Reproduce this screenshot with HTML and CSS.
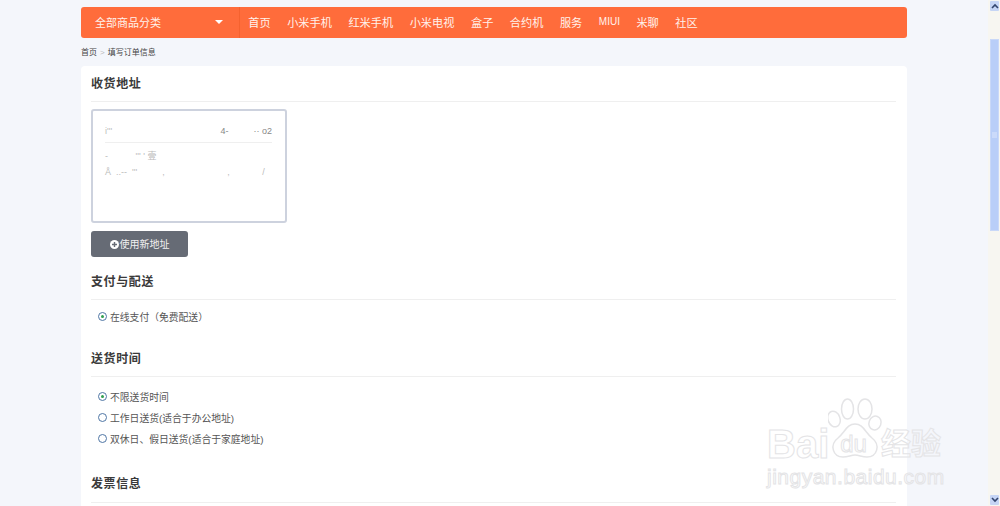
FILE: index.html
```html
<!DOCTYPE html>
<html lang="zh-CN">
<head>
    <meta charset="UTF-8">
    <title>填写订单信息</title>
    <link rel="stylesheet" href="styles.css">
</head>
<body>
    <div class="page">
        <div class="nav">
            <div class="nav-category">全部商品分类<span class="caret"></span></div>
            <a>首页</a>
            <a>小米手机</a>
            <a>红米手机</a>
            <a>小米电视</a>
            <a>盒子</a>
            <a>合约机</a>
            <a>服务</a>
            <a class="nav-latin">MIUI</a>
            <a>米聊</a>
            <a>社区</a>
        </div>

        <div class="crumbs">首页<span class="crumb-sep">&gt;</span>填写订单信息</div>

        <div class="panel">
            <h3 class="first">收货地址</h3>
            <div class="address-card">
                <div class="address-top">
                    <span>i'''</span>
                    <span>4-&nbsp;&nbsp;&nbsp;&nbsp;&nbsp;&nbsp;&nbsp;&nbsp;&nbsp;&nbsp;·· o2</span>
                </div>
                <p class="smudge">-&nbsp;&nbsp;&nbsp;&nbsp;&nbsp;&nbsp;&nbsp;&nbsp;&nbsp;&nbsp;&nbsp;'''&nbsp;'&nbsp;壹</p>
                <p class="smudge">Å&nbsp;&nbsp;..--&nbsp;&nbsp;'''&nbsp;&nbsp;&nbsp;&nbsp;&nbsp;&nbsp;&nbsp;&nbsp;&nbsp;&nbsp;,&nbsp;&nbsp;&nbsp;&nbsp;&nbsp;&nbsp;&nbsp;&nbsp;&nbsp;&nbsp;&nbsp;&nbsp;&nbsp;&nbsp;&nbsp;&nbsp;&nbsp;&nbsp;&nbsp;&nbsp;&nbsp;&nbsp;&nbsp;&nbsp;&nbsp;,&nbsp;&nbsp;&nbsp;&nbsp;&nbsp;&nbsp;&nbsp;&nbsp;&nbsp;&nbsp;&nbsp;&nbsp;&nbsp;/</p>
            </div>
            <button class="new-address">
                <svg width="9" height="9" viewBox="0 0 10 10"><circle cx="5" cy="5" r="5" fill="#fff"/><path d="M5 2.2v5.6M2.2 5h5.6" stroke="#666b75" stroke-width="1.6"/></svg>
                <span>使用新地址</span>
            </button>

            <h3 class="pay">支付与配送</h3>
            <div class="options pay-options">
                <div class="option"><span class="radio checked"></span>在线支付（免费配送）</div>
            </div>

            <h3 class="time">送货时间</h3>
            <div class="options">
                <div class="option"><span class="radio checked"></span>不限送货时间</div>
                <div class="option"><span class="radio"></span>工作日送货(适合于办公地址)</div>
                <div class="option"><span class="radio"></span>双休日、假日送货(适合于家庭地址)</div>
            </div>

            <h3 class="invoice">发票信息</h3>
        </div>

        <!-- watermark -->
        <div class="watermark">
            <svg class="paw" width="58" height="62" viewBox="0 0 58 62">
                <g fill="#fff" stroke="#e4e4e6" stroke-width="1.5">
                    <ellipse cx="6" cy="21" rx="6" ry="8" transform="rotate(-20 6 21)"/>
                    <ellipse cx="19.5" cy="11" rx="6" ry="10"/>
                    <ellipse cx="37" cy="11" rx="7" ry="10"/>
                    <ellipse cx="47" cy="25" rx="6" ry="7" transform="rotate(20 47 25)"/>
                    <path d="M27 26c8 0 10 8 17 14 9 7 5 19-5 19-5 0-8-2-12-2s-7 2-12 2C5 59 1 47 10 40c7-6 9-14 17-14z"/>
                </g>
            </svg>
            <div class="wm-brand"><span>Bai</span><span class="wm-du">du</span><span class="wm-cn">经验</span></div>
            <div class="wm-url">jingyan.baidu.com</div>
        </div>
    </div>

    <div class="scrollbar">
        <div class="scroll-btn">
            <svg width="8" height="6" viewBox="0 0 8 6"><path d="M1 5l3-3 3 3" fill="none" stroke="#33456e" stroke-width="1.6"/></svg>
        </div>
        <div class="scroll-track"><div class="scroll-thumb"><span class="scroll-grip"></span></div></div>
        <div class="scroll-btn">
            <svg width="8" height="6" viewBox="0 0 8 6"><path d="M1 1l3 3 3-3" fill="none" stroke="#33456e" stroke-width="1.6"/></svg>
        </div>
    </div>
</body>
</html>
```

FILE: styles.css
```css
html, body {
    height: 100%;
}

body {
    margin: 0;
    display: flex;
    overflow: hidden;
    background-color: #f4f6fb;
    font-family: "Liberation Sans", "Noto Sans CJK SC", sans-serif;
    color: #555;
}

.page {
    position: relative;
    flex: 1;
    padding: 7px 0 0 81px;
    overflow: hidden;
}

/* nav bar */
.nav {
    width: 826px;
    height: 31px;
    box-sizing: border-box;
    display: flex;
    align-items: center;
    background-color: #ff6c3b;
    border-radius: 3px;
    color: #fff2ec;
    font-size: 11.2px;
}

.nav-category {
    width: 159px;
    height: 100%;
    box-sizing: border-box;
    padding: 0 16px 2px 14px;
    display: flex;
    align-items: center;
    justify-content: space-between;
    border-right: 1px solid #f5622f;
    font-size: 11px;
}

.caret {
    width: 0;
    height: 0;
    border-left: 4px solid transparent;
    border-right: 4px solid transparent;
    border-top: 4px solid #fff;
}

.nav a {
    margin: 0 8.25px;
    padding-bottom: 2px;
}

.nav a.nav-latin {
    font-size: 10px;
}

.crumbs {
    height: 28px;
    line-height: 30px;
    font-size: 8px;
    color: #444;
}

.crumb-sep {
    margin: 0 3px;
    color: #bbb;
}

.panel {
    width: 826px;
    height: 480px;
    box-sizing: border-box;
    padding: 0 11px 0 10px;
    background-color: #fff;
    border-radius: 4px;
}

h3 {
    margin: 0;
    padding-bottom: 8px;
    border-bottom: 1px solid #efefef;
    font-size: 12px;
    line-height: 18px;
    letter-spacing: 0.6px;
    color: #3a3a3a;
}

h3.first {
    padding-top: 9px;
}

h3.pay {
    margin-top: 16px;
}

h3.time {
    margin-top: 23px;
}

h3.invoice {
    margin-top: 26px;
    padding-bottom: 9px;
}

.address-card {
    width: 196px;
    height: 114px;
    box-sizing: border-box;
    margin-top: 7px;
    padding: 14px 13px 0 12px;
    border: 2px solid #cdd2de;
    border-radius: 3px;
    font-size: 9px;
    color: #bbb;
}

.address-top {
    display: flex;
    justify-content: space-between;
    line-height: 12px;
    padding-bottom: 5px;
    border-bottom: 1px solid #efefef;
}

.address-top span:last-child {
    color: #888;
}

.smudge {
    margin: 8px 0 0;
    line-height: 11px;
    white-space: nowrap;
}

.smudge + .smudge {
    margin-top: 5px;
}

.new-address {
    display: flex;
    align-items: center;
    justify-content: center;
    gap: 1px;
    width: 97px;
    height: 26px;
    margin-top: 8px;
    padding: 0;
    border: none;
    border-radius: 3px;
    background-color: #666b75;
    color: #f1f1f1;
    font-family: inherit;
    font-size: 10px;
}

.new-address span {
    padding-bottom: 2px;
}

.options {
    padding: 9px 0 0 7px;
}

.pay-options {
    padding-top: 6px;
}

.option {
    height: 21px;
    display: flex;
    align-items: center;
    font-size: 9.8px;
    color: #555;
}

.radio {
    width: 9px;
    height: 9px;
    box-sizing: border-box;
    margin-right: 3px;
    display: flex;
    align-items: center;
    justify-content: center;
    border: 1px solid #4f76a5;
    border-radius: 50%;
}

.radio.checked::after {
    content: "";
    width: 3px;
    height: 3px;
    border-radius: 50%;
    background-color: #2f9e4f;
}

/* watermark */
.watermark {
    position: absolute;
    left: 767px;
    top: 398px;
    width: 180px;
    color: transparent;
    -webkit-text-stroke: 1px #e4e4e6;
}

.paw {
    position: absolute;
    left: 61px;
    top: 0;
}

.wm-brand {
    position: relative;
    display: flex;
    height: 48px;
    margin-top: 22px;
    align-items: center;
    font-size: 40px;
    font-weight: bold;
    line-height: 40px;
}

.wm-du {
    margin-left: 11px;
    font-size: 24px;
    font-weight: normal;
}

.wm-cn {
    margin-left: 14px;
    font-size: 30px;
}

.wm-url {
    position: relative;
    margin-top: -5px;
    font-size: 21px;
    line-height: 28px;
    letter-spacing: 0.5px;
}

/* scrollbar */
.scrollbar {
    width: 12px;
    box-sizing: border-box;
    padding: 1px 1px 1px 2px;
    display: flex;
    flex-direction: column;
    background-color: #f7f6f1;
}

.scroll-btn {
    height: 10px;
    display: flex;
    align-items: center;
    justify-content: center;
    background-color: #c6d5f5;
    border-radius: 1px;
}

.scroll-track {
    flex: 1;
    padding-top: 28px;
}

.scroll-thumb {
    height: 192px;
    box-sizing: border-box;
    display: flex;
    align-items: center;
    justify-content: center;
    background-color: #b9cef8;
    border: 1px solid #c9d8f8;
}

.scroll-grip {
    width: 5px;
    height: 6px;
    background-color: #cbdafa;
}
```
